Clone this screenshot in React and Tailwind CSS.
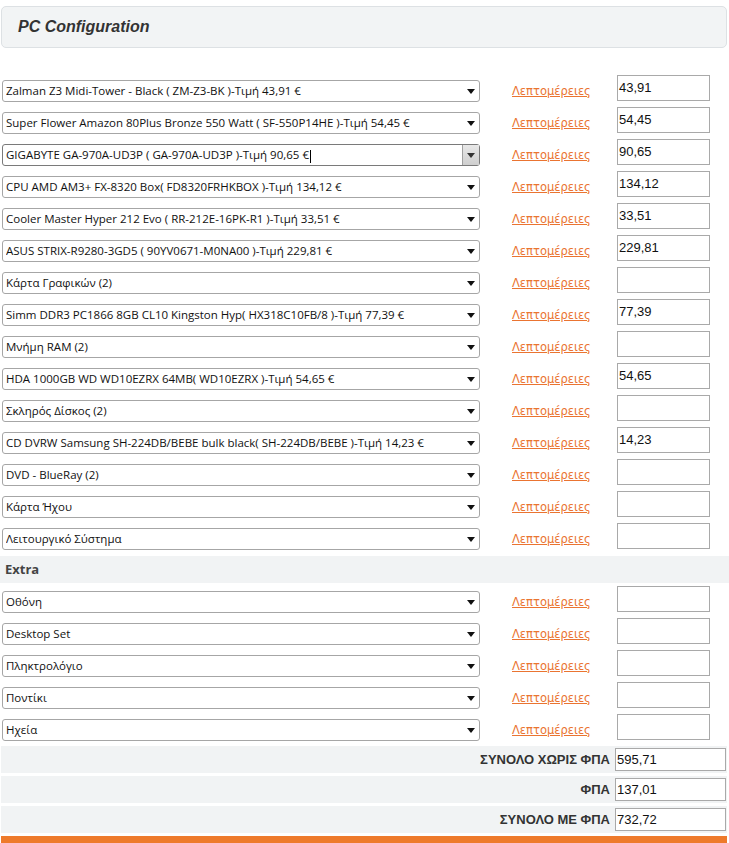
import React from "react";

const rows = [
  ["Zalman Z3 Midi-Tower - Black ( ZM-Z3-BK )-Τιμή 43,91 €", "43,91"],
  ["Super Flower Amazon 80Plus Bronze 550 Watt ( SF-550P14HE )-Τιμή 54,45 €", "54,45"],
  ["GIGABYTE GA-970A-UD3P ( GA-970A-UD3P )-Τιμή 90,65 €", "90,65", true],
  ["CPU AMD AM3+ FX-8320 Box( FD8320FRHKBOX )-Τιμή 134,12 €", "134,12"],
  ["Cooler Master Hyper 212 Evo ( RR-212E-16PK-R1 )-Τιμή 33,51 €", "33,51"],
  ["ASUS STRIX-R9280-3GD5 ( 90YV0671-M0NA00 )-Τιμή 229,81 €", "229,81"],
  ["Κάρτα Γραφικών (2)", ""],
  ["Simm DDR3 PC1866 8GB CL10 Kingston Hyp( HX318C10FB/8 )-Τιμή 77,39 €", "77,39"],
  ["Μνήμη RAM (2)", ""],
  ["HDA 1000GB WD WD10EZRX 64MB( WD10EZRX )-Τιμή 54,65 €", "54,65"],
  ["Σκληρός Δίσκος (2)", ""],
  ["CD DVRW Samsung SH-224DB/BEBE bulk black( SH-224DB/BEBE )-Τιμή 14,23 €", "14,23"],
  ["DVD - BlueRay (2)", ""],
  ["Κάρτα Ήχου", ""],
  ["Λειτουργικό Σύστημα", ""],
];

const extras = ["Οθόνη", "Desktop Set", "Πληκτρολόγιο", "Ποντίκι", "Ηχεία"];

function Row({ label, value, focused }) {
  return (
    <div className="flex h-[32px] items-start">
      <div
        className={`ml-[2px] mt-[5px] flex h-[22px] w-[478px] items-center rounded-[3px] border bg-white pl-[3px] ${
          focused ? "border-[#7a7a7a]" : "border-[#a6a6a6]"
        }`}
      >
        <span
          className="flex-1 truncate text-[11.5px] text-[#111]"
          style={{ fontFamily: '"Open Sans", sans-serif' }}
        >
          {label}
          {focused && <span className="ml-[1px] inline-block h-[13px] w-px bg-black align-middle" />}
        </span>
        {focused ? (
          <div className="flex h-[20px] w-[17px] items-center justify-center border-l border-[#a0a0a0] bg-gradient-to-b from-[#e8e8e8] to-[#cfcfcf]">
            <svg width="8" height="5" viewBox="0 0 8 5">
              <path d="M0 0H8L4 5Z" fill="#333" />
            </svg>
          </div>
        ) : (
          <div className="flex h-[20px] w-[17px] items-center justify-center">
            <svg width="8" height="5" viewBox="0 0 8 5">
              <path d="M0 0H8L4 5Z" fill="#111" />
            </svg>
          </div>
        )}
      </div>
      <a
        href="#"
        className="ml-[32px] mt-[8px] text-[11.5px] leading-[16px] text-[#ea7431] underline"
        style={{ fontFamily: '"DejaVu Sans", sans-serif' }}
      >
        Λεπτομέρειες
      </a>
      <div className="ml-auto mr-[19px] flex h-[26px] w-[93px] items-center border border-[#a9a9a9] bg-white pl-px">
        <span
          className="text-[13px] text-[#111]"
          style={{ fontFamily: '"Liberation Sans", Arial, sans-serif' }}
        >
          {value}
        </span>
      </div>
    </div>
  );
}

function Total({ label, value }) {
  return (
    <div className="mb-[3px] ml-px flex h-[27px] w-[726px] items-center justify-end bg-[#f1f3f4]">
      <span
        className="mr-[5px] text-[13px] font-bold text-[#333]"
        style={{ fontFamily: '"Liberation Sans", Arial, sans-serif' }}
      >
        {label}
      </span>
      <div className="mr-[1px] flex h-[23px] w-[111px] items-center border border-[#a9a9a9] bg-white pl-px">
        <span
          className="text-[13px] text-[#111]"
          style={{ fontFamily: '"Liberation Sans", Arial, sans-serif' }}
        >
          {value}
        </span>
      </div>
    </div>
  );
}

export default function App() {
  return (
    <div className="h-[843px] w-[729px] overflow-hidden bg-white">
      <div className="pt-[6px]">
        <div className="ml-px flex h-[42px] w-[726px] items-center rounded-[5px] border border-[#dde1e4] bg-[#f2f4f5] pl-[16px]">
          <h2
            className="text-[16px] font-bold italic text-[#333]"
            style={{ fontFamily: '"Liberation Sans", Arial, sans-serif' }}
          >
            PC Configuration
          </h2>
        </div>
      </div>
      <div className="mt-[27px]">
        {rows.map(([l, v, f], i) => (
          <Row key={i} label={l} value={v} focused={f} />
        ))}
        <div className="h-[31px] pt-px">
          <div className="flex h-[27px] items-center bg-[#f1f3f4] pl-[5px]">
            <span
              className="text-[13px] font-bold text-[#444]"
              style={{ fontFamily: '"Open Sans", sans-serif' }}
            >
              Extra
            </span>
          </div>
        </div>
        {extras.map((l, i) => (
          <Row key={i} label={l} value="" />
        ))}
      </div>
      <div>
        <Total label="ΣΥΝΟΛΟ ΧΩΡΙΣ ΦΠΑ" value="595,71" />
        <Total label="ΦΠΑ" value="137,01" />
        <Total label="ΣΥΝΟΛΟ ΜΕ ΦΠΑ" value="732,72" />
        <div className="ml-px h-[12px] w-[726px] bg-[#ee7a2b]" />
      </div>
    </div>
  );
}
